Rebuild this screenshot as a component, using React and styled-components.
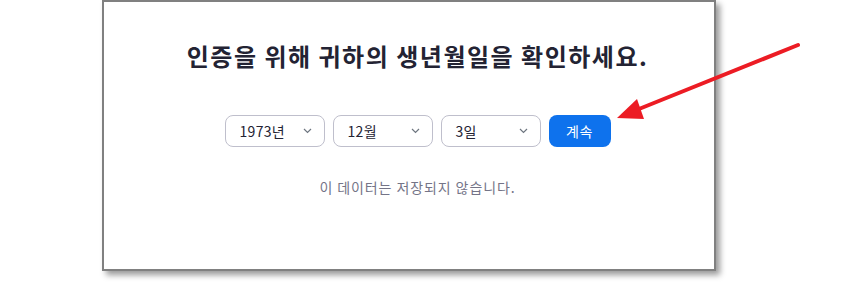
import React from "react";
import styled, { createGlobalStyle } from "styled-components";

const GlobalStyle = createGlobalStyle`
  html, body {
    margin: 0;
    padding: 0;
    background: #ffffff;
  }
  body {
    font-family: "Noto Sans CJK KR", "Noto Sans", sans-serif;
  }
`;

const Page = styled.div`
  position: relative;
  width: 853px;
  height: 299px;
  overflow: hidden;
`;

const Panel = styled.div`
  box-sizing: border-box;
  margin-left: 102px;
  width: 614px;
  height: 271px;
  border: 2px solid #808080;
  background: #ffffff;
  box-shadow: 4px 4px 6px rgba(0, 0, 0, 0.4);
  display: flex;
  flex-direction: column;
  align-items: center;
  padding: 38px 0 0 17px;
`;

const Title = styled.h1`
  margin: 0;
  font-size: 24px;
  line-height: 32px;
  font-weight: 700;
  letter-spacing: 1.5px;
  color: #232333;
  white-space: nowrap;
`;

const Row = styled.div`
  display: flex;
  gap: 8px;
  margin-top: 43px;
`;

const Select = styled.div`
  box-sizing: border-box;
  width: 100px;
  height: 32px;
  border: 1px solid #bfbfcc;
  border-radius: 8px;
  display: flex;
  align-items: center;
  justify-content: space-between;
  padding: 0 12px 0 14px;
  font-size: 14px;
  letter-spacing: 0.3px;
  color: #232333;
  background: #ffffff;
`;

const Button = styled.button`
  box-sizing: border-box;
  width: 62px;
  height: 32px;
  border: none;
  border-radius: 8px;
  background: #0e72ed;
  color: #ffffff;
  font-family: inherit;
  font-size: 14px;
  letter-spacing: 0.5px;
  padding: 0;
`;

const Note = styled.p`
  margin: 30px 0 0;
  font-size: 14px;
  line-height: 20px;
  letter-spacing: 0.9px;
  color: #747487;
`;

const Arrow = styled.svg`
  position: absolute;
  left: 0;
  top: 0;
  pointer-events: none;
`;

const Chevron = () => (
  <svg width="9" height="6" viewBox="0 0 9 6">
    <path d="M1 1l3.5 3.5L8 1" fill="none" stroke="#6e7680" strokeWidth="1.2" />
  </svg>
);

const DateSelect = ({ label }) => (
  <Select>
    <span>{label}</span>
    <Chevron />
  </Select>
);

export default function App() {
  return (
    <Page>
      <GlobalStyle />
      <Panel>
        <Title>인증을 위해 귀하의 생년월일을 확인하세요.</Title>
        <Row>
          <DateSelect label="1973년" />
          <DateSelect label="12월" />
          <DateSelect label="3일" />
          <Button>계속</Button>
        </Row>
        <Note>이 데이터는 저장되지 않습니다.</Note>
      </Panel>
      <Arrow width="853" height="299" viewBox="0 0 853 299">
        <line x1="798" y1="45" x2="634" y2="111" stroke="#ec1c24" strokeWidth="4" strokeLinecap="round" />
        <polygon points="617,118 637,99 644,119" fill="#ec1c24" />
      </Arrow>
    </Page>
  );
}
